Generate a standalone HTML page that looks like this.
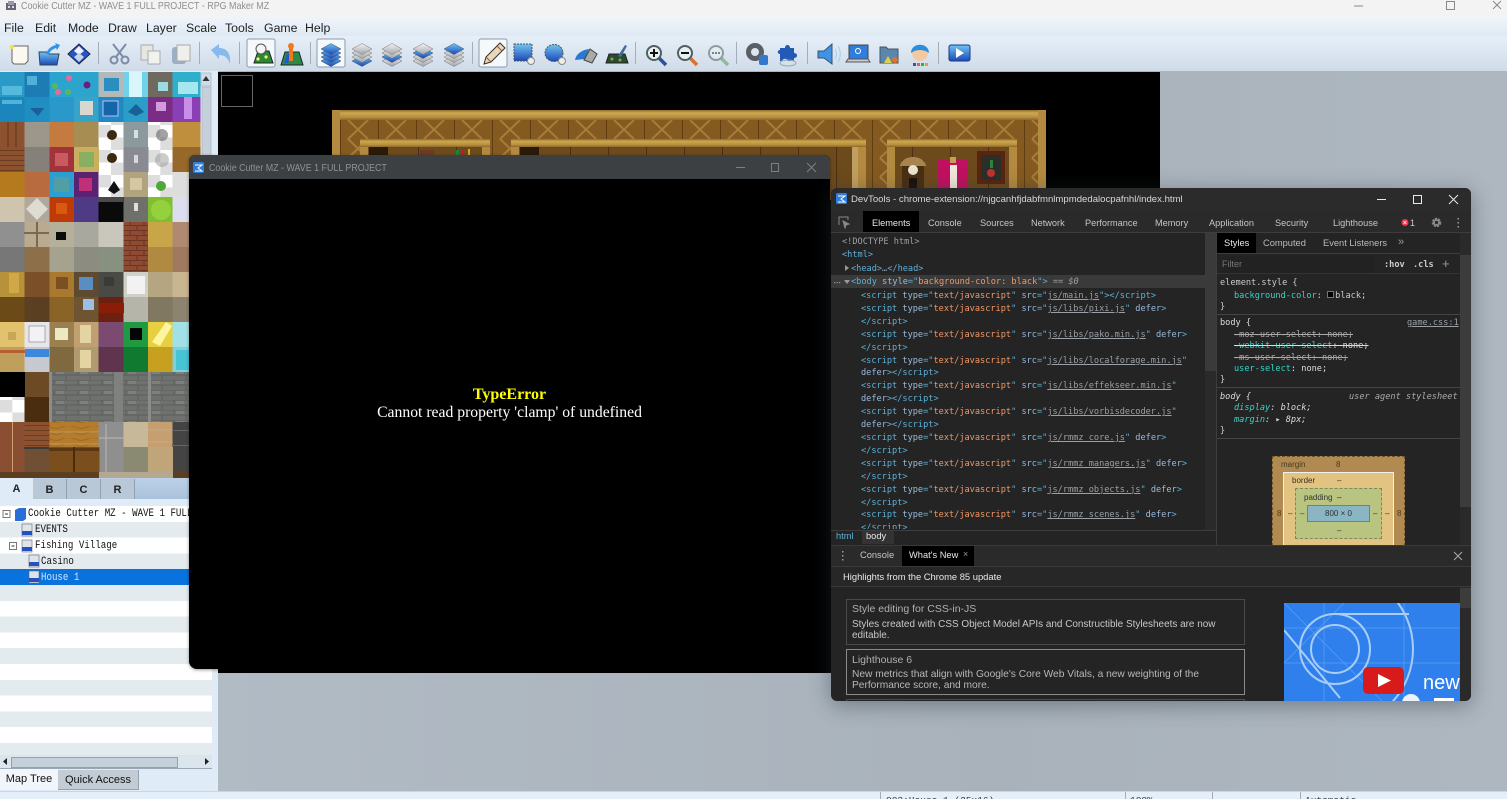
<!DOCTYPE html>
<html><head><meta charset="utf-8"><title>Cookie Cutter MZ</title>
<style>
html,body{margin:0;padding:0;width:1507px;height:799px;overflow:hidden;background:#aeb8c1;font-family:"Liberation Sans",sans-serif}
body{filter:blur(.35px)}
.a{position:absolute}
.t{position:absolute;white-space:pre}
.menu span{position:absolute;top:21px;font-size:12.3px;color:#222}
.mono{font-family:"DejaVu Sans Mono","Liberation Mono",monospace;font-size:8.6px;line-height:13px;letter-spacing:0}
.tab{position:absolute;top:218px;font-size:9.2px;color:#c6c6c6}
.g{color:#9aa0a6}.b{color:#5db0d7}.o{color:#f29766}.n{color:#9bbbdc}.u{text-decoration:underline;color:#9aa0a6}.c{color:#35d4c7}.w{color:#e0e0e0}
.row{position:absolute;left:0;width:212px;height:16px}
.tr{position:absolute;font-family:"Liberation Mono",monospace;font-size:11px;color:#111;transform:scaleX(.83);transform-origin:0 0;white-space:pre}
</style></head><body>

<!-- title + menu -->
<div class="a" style="left:0;top:0;width:1507px;height:18px;background:#f3f3f3"></div>
<div class="t" style="left:21px;top:0;font-size:10.4px;line-height:13px;color:#8f8f8f;transform:scaleX(.858);transform-origin:0 0">Cookie Cutter MZ - WAVE 1 FULL PROJECT - RPG Maker MZ</div>
<svg class="a" style="left:5px;top:0" width="12" height="12"><rect x="1" y="3" width="10" height="7" fill="#667"/><rect x="3" y="1" width="6" height="4" fill="#99a"/><rect x="3" y="6" width="2" height="2" fill="#dde"/><rect x="7" y="6" width="2" height="2" fill="#dde"/></svg>
<svg class="a" style="left:1340px;top:0" width="167" height="14" fill="none" stroke="#888"><path d="M14 6h9"/><rect x="106.500" y="1.500" width="8" height="8"/><path d="M153 1l8 8m0-8l-8 8"/></svg>
<div class="a menu" style="left:0;top:18px;width:1507px;height:18px;background:linear-gradient(#eef4fa,#dfe9f3)"></div>
<div class="menu"><span style="left:4px">File</span><span style="left:35px">Edit</span><span style="left:68px">Mode</span><span style="left:108px">Draw</span><span style="left:146px">Layer</span><span style="left:186px">Scale</span><span style="left:225px">Tools</span><span style="left:264px">Game</span><span style="left:305px">Help</span></div>
<div class="a" style="left:0;top:36px;width:1507px;height:35px;background:linear-gradient(#e6eff8,#cfdbe8)"></div>

<!-- toolbar -->
<svg class="a" style="left:0;top:36px" width="1010" height="35">
<defs>
<linearGradient id="bl" x1="0" y1="0" x2="0" y2="1"><stop offset="0" stop-color="#6fc4f2"/><stop offset="1" stop-color="#1c48b8"/></linearGradient>
<linearGradient id="gr" x1="0" y1="0" x2="0" y2="1"><stop offset="0" stop-color="#f4f4f4"/><stop offset="1" stop-color="#a3a5a8"/></linearGradient>
<g id="lb"><path d="M-10 0L0-5.500 10 0 0 5.500Z" fill="url(#bl)" stroke="#456" stroke-width=".5"/></g>
<g id="lg"><path d="M-10 0L0-5.500 10 0 0 5.500Z" fill="url(#gr)" stroke="#777" stroke-width=".5"/></g>
<g id="gl"><circle r="7" fill="#e8f1f1" stroke="#4e6062" stroke-width="2"/></g>
</defs>
<g stroke="#a3aeb9" stroke-width="1"><path d="M98.500 6v22M199.500 6v22M239.500 6v22M310.500 6v22M472.500 6v22M635.500 6v22M736.500 6v22M807.500 6v22M938.500 6v22"/></g>
<g fill="#f6f9fc" stroke="#8b9bac"><rect x="247" y="3" width="28" height="28" rx="2"/><rect x="317" y="3" width="28" height="28" rx="2"/><rect x="479" y="3" width="28" height="28" rx="2"/></g>
<!-- new -->
<path d="M12 10h16v15l-3 3H14l-2-2z" fill="#fbf9ef" stroke="#666"/><circle cx="12" cy="11" r="2" fill="#f4e23a"/>
<!-- open -->
<path d="M39 16h8l2 2h10l-2 11H40z" fill="url(#bl)" stroke="#345"/><path d="M46 18c2-6 6-8 10-9l-1-2 5 2-3 5-1-2c-3 1-6 3-7 6z" fill="#2f95e6"/>
<!-- save -->
<path d="M79 8l11 10-11 10-11-10z" fill="#2556c8" stroke="#224"/><path d="M79 10l5 5-5 4-5-4z" fill="#eef"/><path d="M74 21l5-4 5 4-5 5z" fill="#c9d4e8"/>
<!-- cut -->
<g fill="none" stroke="#7c8ba6" stroke-width="2"><path d="M113 8l10 13M126 8l-10 13"/><circle cx="114" cy="24" r="3.500"/><circle cx="125" cy="24" r="3.500"/></g>
<!-- copy -->
<path d="M141 9h12v15h-12z" fill="#e6e6e3" stroke="#aaa"/><path d="M148 15h12v13h-12z" fill="#f1f1ee" stroke="#aaa"/>
<!-- paste -->
<rect x="172" y="11" width="14" height="17" rx="3" fill="#9ab0c4"/><path d="M177 9h13v16h-13z" fill="#efefec" stroke="#aaa"/>
<!-- undo -->
<path d="M211 14l8-6v4c7 0 12 4 11 16-2-6-5-9-11-9v4z" fill="#86b9ee"/>
<!-- map -->
<path d="M254 27l4-12h11l4 12z" fill="#2b8a2b" stroke="#223"/><circle cx="261" cy="13" r="5" fill="#f4f4f4" stroke="#555"/><circle cx="266" cy="21" r="1.600" fill="#ee8"/><circle cx="258" cy="23" r="1.600" fill="#ee8"/>
<!-- event -->
<path d="M281 29l4-13h14l4 13z" fill="#2a8c44" stroke="#223"/><path d="M284 27l3-9h4l-3 9z" fill="#2058c8"/><rect x="289" y="11" width="4" height="14" fill="#ee7a20"/><circle cx="291" cy="10" r="3" fill="#ee7a20"/>
<!-- layers -->
<g transform="translate(331 0)"><use href="#lb" y="25"/><use href="#lb" y="21"/><use href="#lb" y="17"/><use href="#lb" y="13"/></g>
<g transform="translate(362 0)"><use href="#lb" y="25"/><use href="#lg" y="21"/><use href="#lg" y="17"/><use href="#lg" y="13"/></g>
<g transform="translate(392 0)"><use href="#lg" y="25"/><use href="#lb" y="21"/><use href="#lg" y="17"/><use href="#lg" y="13"/></g>
<g transform="translate(423 0)"><use href="#lg" y="25"/><use href="#lg" y="21"/><use href="#lb" y="17"/><use href="#lg" y="13"/></g>
<g transform="translate(454 0)"><use href="#lg" y="25"/><use href="#lg" y="21"/><use href="#lg" y="17"/><use href="#lb" y="13"/></g>
<!-- pencil -->
<path d="M484 28l2-7 14-14 5 5-14 14z" fill="#e8d8b8" stroke="#333"/><path d="M486 21l5 5M497 10l5 5" stroke="#c14030" fill="none"/>
<!-- rect -->
<rect x="514" y="8" width="18" height="17" fill="url(#bl)" stroke="#555" stroke-dasharray="2 1"/><circle cx="531" cy="25" r="3.500" fill="#eee" stroke="#888"/>
<!-- ellipse -->
<ellipse cx="554" cy="17" rx="9" ry="8.500" fill="url(#bl)" stroke="#555" stroke-dasharray="2 1"/><circle cx="562" cy="25" r="3.500" fill="#eee" stroke="#888"/>
<!-- flood -->
<path d="M575 24c1-6 7-10 14-11l-4 10z" fill="#2a78d0"/><path d="M584 24l6-11 7 5-5 9z" fill="#a9a9a6" stroke="#444"/>
<!-- shadow -->
<path d="M606 27l3-9h16l3 9z" fill="#2c4a2e" stroke="#222"/><path d="M618 20l7-11 2 1-6 11z" fill="#456a9a"/><circle cx="612" cy="23" r="1.500" fill="#7a5"/><circle cx="620" cy="24" r="1.500" fill="#7a5"/>
<!-- zoom -->
<g transform="translate(654 17)"><path d="M5 5l7 7" stroke="#2f4f9a" stroke-width="3.500"/><use href="#gl"/><path d="M-4 0h8M0-4v8" stroke="#111" stroke-width="2"/></g>
<g transform="translate(685 17)"><path d="M5 5l7 7" stroke="#e0702a" stroke-width="3.500"/><use href="#gl"/><path d="M-4 0h8" stroke="#111" stroke-width="2"/></g>
<g transform="translate(716 17)" opacity=".55"><path d="M5 5l7 7" stroke="#50a050" stroke-width="3.500"/><use href="#gl"/><path d="M-4 0h8" stroke="#333" stroke-width="2" stroke-dasharray="2 1"/></g>
<!-- db -->
<circle cx="755" cy="16" r="6.500" fill="none" stroke="#5a5f63" stroke-width="5"/><rect x="759" y="19" width="9" height="10" rx="2" fill="#3277d0"/>
<!-- plugin -->
<path d="M780 12h5c0-4 5-4 5 0h4v5c4 0 4 5 0 5v3h-6c-1-3-5-3-6 0h-2v-7c-3 0-3-4 0-4z" fill="#235ab8"/><ellipse cx="788" cy="27" rx="8" ry="3" fill="none" stroke="#9aa"/>
<!-- sound -->
<path d="M818 15h6l8-7v20l-8-6h-6z" fill="#3f93e2" stroke="#357"/><path d="M835 13c2 3 2 7 0 10M838 10c3 5 3 11 0 16" stroke="#9fd0ef" fill="none"/>
<!-- laptop -->
<rect x="849" y="9" width="19" height="14" fill="#2f7edc" stroke="#444"/><path d="M846 26h24l-2-3h-20z" fill="#ccc" stroke="#555"/><circle cx="858" cy="15" r="2.500" fill="none" stroke="#fff"/>
<!-- folder -->
<path d="M880 11h6l2 2h10v14h-18z" fill="#5d86ac" stroke="#456"/><path d="M884 27l4-7 4 7z" fill="#d9d24a"/><circle cx="895" cy="24" r="3" fill="#e0702a"/>
<!-- char -->
<circle cx="920" cy="17" r="8" fill="#f3c9a2"/><path d="M911 17c0-11 18-11 18 0-5-4-13-4-18 0z" fill="#2c8fdc"/><rect x="913" y="27" width="3" height="3" fill="#35a"/><rect x="917" y="27" width="3" height="3" fill="#d63"/><rect x="921" y="27" width="3" height="3" fill="#3a5"/><rect x="925" y="27" width="3" height="3" fill="#ca3"/>
<!-- play -->
<rect x="949" y="9" width="21" height="16" rx="2" fill="url(#bl)" stroke="#1a3a80"/><path d="M956 12l8 5-8 5z" fill="#fff"/>
</svg>

<!-- left panel -->
<div class="a" style="left:0;top:71px;width:218px;height:720px;background:#dfecf8"></div>

<!-- tileset -->
<svg class="a" style="left:0;top:72px" width="212" height="407" viewBox="0 72 212 407">
<defs>
<pattern id="chk" width="24.670" height="25" patternUnits="userSpaceOnUse"><rect width="25" height="25" fill="#fff"/><rect width="12.300" height="12.500" fill="#ddd"/><rect x="12.300" y="12.500" width="12.400" height="12.500" fill="#ddd"/></pattern>
<pattern id="brk" width="24" height="10" patternUnits="userSpaceOnUse"><rect width="24" height="10" fill="#6f716f"/><path d="M0 0h24M0 5h24M6 0v5M18 5v5" stroke="#5c5e5c" stroke-width="1"/><rect x="8" y="1" width="8" height="3" fill="#7e807e"/></pattern>
<pattern id="red" width="14" height="10" patternUnits="userSpaceOnUse"><rect width="14" height="10" fill="#8e4a32"/><path d="M0 .500h14M0 5.500h14M4 0v5M11 5v5" stroke="#6a3522"/></pattern>
<pattern id="wd" width="25" height="5" patternUnits="userSpaceOnUse"><rect width="25" height="5" fill="#8c5230"/><path d="M0 .500h25" stroke="#6a3c20"/></pattern>
<pattern id="wv" width="25" height="6" patternUnits="userSpaceOnUse"><rect width="25" height="6" fill="#b47c2c"/><path d="M0 1c4 2 8 2 12 0s8-2 13 0" stroke="#a06c20" fill="none"/></pattern>
</defs>
<!-- row fills -->
<g shape-rendering="crispEdges">
<rect x="0" y="72" width="25" height="25" fill="#2a9bc6"/><rect x="24.670" y="72" width="25" height="25" fill="#1c7cb3"/><rect x="49.330" y="72" width="25" height="25" fill="#2ba5cd"/><rect x="74" y="72" width="25" height="25" fill="#2ba5cd"/><rect x="98.670" y="72" width="25" height="25" fill="#b5b8b8"/><rect x="123.330" y="72" width="25" height="25" fill="#6fd2ea"/><rect x="148" y="72" width="25" height="25" fill="#6e6a5f"/><rect x="172.670" y="72" width="28" height="25" fill="#2eb0cc"/>
<rect x="0" y="97" width="25" height="25" fill="#1a86bb"/><rect x="24.670" y="97" width="25" height="25" fill="#1f8ec0"/><rect x="49.330" y="97" width="25" height="25" fill="#2b98cc"/><rect x="74" y="97" width="25" height="25" fill="#39a2c9"/><rect x="98.670" y="97" width="25" height="25" fill="#1f89c4"/><rect x="123.330" y="97" width="25" height="25" fill="#2a9dc9"/><rect x="148" y="97" width="25" height="25" fill="#7b2d85"/><rect x="172.670" y="97" width="28" height="25" fill="#8a3fb5"/>
<rect x="0" y="122" width="25" height="25" fill="#8c5230"/><rect x="0" y="147" width="25" height="25" fill="url(#wd)"/><rect x="24.670" y="122" width="25" height="25" fill="#9c978a"/><rect x="49.330" y="122" width="25" height="25" fill="#c57b3f"/><rect x="74" y="122" width="25" height="25" fill="#a78d52"/><rect x="98.670" y="122" width="25" height="50" fill="url(#chk)"/><rect x="123.330" y="122" width="25" height="25" fill="#8c9a9e"/><rect x="148" y="122" width="25" height="50" fill="url(#chk)"/><rect x="172.670" y="122" width="28" height="25" fill="#c08f3e"/>
<rect x="24.670" y="147" width="25" height="25" fill="#85807a"/><rect x="49.330" y="147" width="25" height="25" fill="#a3333a"/><rect x="74" y="147" width="25" height="25" fill="#c9b060"/><rect x="123.330" y="147" width="25" height="25" fill="#8a8a92"/><rect x="172.670" y="147" width="28" height="25" fill="#96682a"/>
<rect x="0" y="172" width="25" height="25" fill="#b5791e"/><rect x="24.670" y="172" width="25" height="25" fill="#b96b40"/><rect x="49.330" y="172" width="25" height="25" fill="#2a9fd0"/><rect x="74" y="172" width="25" height="25" fill="#5a2270"/><rect x="98.670" y="172" width="25" height="25" fill="url(#chk)"/><rect x="123.330" y="172" width="25" height="25" fill="#b0a380"/><rect x="148" y="172" width="25" height="25" fill="url(#chk)"/><rect x="172.670" y="172" width="28" height="25" fill="#ddd"/>
<rect x="0" y="197" width="25" height="25" fill="#cfc4ad"/><rect x="24.670" y="197" width="25" height="25" fill="#b0a898"/><rect x="49.330" y="197" width="25" height="25" fill="#c03a08"/><rect x="74" y="197" width="25" height="25" fill="#4f3a85"/><rect x="98.670" y="197" width="25" height="25" fill="#0a0a0a"/><rect x="123.330" y="197" width="25" height="25" fill="#70706a"/><rect x="148" y="197" width="25" height="25" fill="#80c030"/><rect x="172.670" y="197" width="28" height="25" fill="#dde"/>
<rect x="0" y="222" width="25" height="25" fill="#909090"/><rect x="24.670" y="222" width="25" height="25" fill="#b9aa90"/><rect x="49.330" y="222" width="25" height="25" fill="#b5b09a"/><rect x="74" y="222" width="25" height="25" fill="#a8a89f"/><rect x="98.670" y="222" width="25" height="25" fill="#c9c7bb"/><rect x="123.330" y="222" width="25" height="50" fill="url(#red)"/><rect x="148" y="222" width="25" height="25" fill="#c9a54a"/><rect x="172.670" y="222" width="28" height="25" fill="#b08a70"/>
<rect x="0" y="247" width="25" height="25" fill="#777"/><rect x="24.670" y="247" width="25" height="25" fill="#8d6f4a"/><rect x="49.330" y="247" width="25" height="25" fill="#a5a28f"/><rect x="74" y="247" width="25" height="25" fill="#8c8c80"/><rect x="98.670" y="247" width="25" height="25" fill="#889080"/><rect x="148" y="247" width="25" height="25" fill="#b08a40"/><rect x="172.670" y="247" width="28" height="25" fill="#a07a5f"/>
<rect x="0" y="272" width="25" height="25" fill="#b8923a"/><rect x="24.670" y="272" width="25" height="25" fill="#7b5028"/><rect x="49.330" y="272" width="25" height="25" fill="#a8792f"/><rect x="74" y="272" width="25" height="25" fill="#5d4a30"/><rect x="98.670" y="272" width="25" height="25" fill="#4a4a45"/><rect x="123.330" y="272" width="25" height="25" fill="#d0d0c8"/><rect x="148" y="272" width="25" height="25" fill="#b5a580"/><rect x="172.670" y="272" width="28" height="25" fill="#c9b58f"/>
<rect x="0" y="297" width="25" height="25" fill="#6b4a18"/><rect x="24.670" y="297" width="25" height="25" fill="#5a4020"/><rect x="49.330" y="297" width="25" height="25" fill="#8a6326"/><rect x="74" y="297" width="25" height="25" fill="#6e5430"/><rect x="98.670" y="297" width="25" height="25" fill="#6e2010"/><rect x="123.330" y="297" width="25" height="25" fill="#b5b5aa"/><rect x="148" y="297" width="25" height="25" fill="#807860"/><rect x="172.670" y="297" width="28" height="25" fill="#8c8470"/>
<rect x="0" y="322" width="25" height="25" fill="#e2c26c"/><rect x="24.670" y="322" width="25" height="25" fill="#e5e5ea"/><rect x="49.330" y="322" width="25" height="25" fill="#9a8050"/><rect x="74" y="322" width="25" height="25" fill="#c0a070"/><rect x="98.670" y="322" width="25" height="25" fill="#7a4a70"/><rect x="123.330" y="322" width="25" height="25" fill="#1f9a40"/><rect x="148" y="322" width="25" height="25" fill="#e6d040"/><rect x="172.670" y="322" width="28" height="25" fill="#a0e0e6"/>
<rect x="0" y="347" width="25" height="25" fill="#bf9f5c"/><rect x="24.670" y="347" width="25" height="25" fill="#c8c8d0"/><rect x="49.330" y="347" width="25" height="25" fill="#80683f"/><rect x="74" y="347" width="25" height="25" fill="#b09a70"/><rect x="98.670" y="347" width="25" height="25" fill="#60344f"/><rect x="123.330" y="347" width="25" height="25" fill="#0f7a30"/><rect x="148" y="347" width="25" height="25" fill="#c8a020"/><rect x="172.670" y="347" width="28" height="25" fill="#7fd0dc"/>
<rect x="0" y="372" width="25" height="25" fill="#000"/><rect x="24.670" y="372" width="25" height="25" fill="#6b4a25"/><rect x="49.330" y="372" width="151" height="50" fill="url(#brk)"/>
<rect x="0" y="397" width="25" height="25" fill="url(#chk)"/><rect x="24.670" y="397" width="25" height="25" fill="#4a2c0e"/>
<rect x="0" y="422" width="25" height="50" fill="#8a4f33"/><rect x="24.670" y="422" width="25" height="25" fill="url(#wd)"/><rect x="49.330" y="422" width="50" height="25" fill="url(#wv)"/><rect x="98.670" y="422" width="25" height="50" fill="#8f8f8f"/><rect x="123.330" y="422" width="25" height="25" fill="#c8b89a"/><rect x="148" y="422" width="25" height="25" fill="#c59f70"/><rect x="172.670" y="422" width="28" height="50" fill="#444"/>
<rect x="24.670" y="447" width="25" height="25" fill="#6f5034"/><rect x="49.330" y="447" width="50" height="25" fill="#7a4f1d"/><rect x="123.330" y="447" width="25" height="25" fill="#8a8a72"/><rect x="148" y="447" width="25" height="25" fill="#c0a47a"/>
<rect x="0" y="472" width="200" height="6" fill="#5a4020"/><rect x="99" y="472" width="74" height="6" fill="#b5a890"/>
</g>
<!-- tile details -->
<g fill="#67c6e6" opacity=".7"><rect x="2" y="86" width="20" height="9"/><rect x="27" y="76" width="10" height="9"/><rect x="2" y="100" width="20" height="4"/></g>
<g fill="#59b85a"><circle cx="55" cy="86" r="3"/><circle cx="68" cy="92" r="3"/></g><g fill="#e86a9a"><circle cx="69" cy="78" r="3"/><circle cx="58" cy="92" r="3"/></g>
<circle cx="87" cy="85" r="3.500" fill="#6a1e80"/><rect x="104" y="78" width="15" height="13" fill="#2a8fc0"/><rect x="129" y="72" width="13" height="25" fill="#d8f6fb"/><rect x="158" y="82" width="10" height="9" fill="#9cdce0"/><rect x="178" y="82" width="20" height="12" fill="#a5e6ef"/>
<path d="M30 108h14l-6 8z" fill="#1a5e9a"/><rect x="80" y="101" width="13" height="14" fill="#d8d8d0"/><rect x="103" y="101" width="15" height="15" fill="#1466a8" stroke="#cbe" stroke-width="1"/><path d="M128 112l8-8 8 8-8 4z" fill="#1a6096"/><rect x="156" y="102" width="10" height="9" fill="#d39ae0"/><rect x="184" y="97" width="8" height="22" fill="#c78fe8"/>
<circle cx="112" cy="135" r="5" fill="#3a2a10"/><circle cx="112" cy="158" r="5" fill="#3a2a10"/><rect x="134" y="130" width="4" height="8" fill="#d6e0e0"/><rect x="134" y="155" width="4" height="8" fill="#d6d6e0"/><circle cx="162" cy="135" r="6" fill="#666" opacity=".6"/><circle cx="162" cy="160" r="7" fill="#999" opacity=".5"/>
<path d="M8 122v25M16 122v25" stroke="#5e3319"/>
<rect x="55" y="153" width="13" height="13" fill="#c95a60"/><rect x="79" y="152" width="15" height="15" fill="#88b060"/><rect x="54" y="177" width="15" height="15" fill="#c8a020" opacity=".25"/><rect x="79" y="178" width="13" height="13" fill="#c03078"/><path d="M108 190l6-9 6 9-6 4z" fill="#111"/><rect x="130" y="178" width="12" height="12" fill="#d5c8a0"/><circle cx="161" cy="186" r="5" fill="#4ea838"/>
<circle cx="161" cy="210" r="10" fill="#93d23e"/><rect x="56" y="203" width="11" height="11" fill="#d85a10"/><path d="M26 209l11-11 11 11-11 11z" fill="#dedcd2"/><rect x="134" y="203" width="4" height="8" fill="#dedede"/><rect x="98" y="197" width="25" height="5" fill="#4a4a4a"/>
<rect x="56" y="232" width="10" height="8" fill="#0c0c0c"/><rect x="24" y="232" width="25" height="2" fill="#7a6a50"/><rect x="36" y="222" width="2" height="25" fill="#7a6a50"/>
<rect x="127" y="276" width="18" height="18" fill="#f2f2f2"/><rect x="56" y="277" width="12" height="12" fill="#7a4f22"/><rect x="79" y="277" width="14" height="13" fill="#5a8dc2"/><rect x="9" y="273" width="10" height="20" fill="#d0a848"/><rect x="83" y="299" width="11" height="11" fill="#9cc0e4"/><rect x="104" y="277" width="10" height="9" fill="#3a3a36"/><rect x="99" y="303" width="25" height="10" fill="#8a1c08"/>
<rect x="29" y="326" width="16" height="16" fill="#f2f2f4" stroke="#a8a8b0"/><rect x="25" y="349" width="24" height="8" fill="#3b88dc"/><rect x="55" y="328" width="13" height="12" fill="#ece8c4"/><rect x="8" y="332" width="8" height="8" fill="#c8a858"/><rect x="0" y="350" width="25" height="3" fill="#b85e30"/><rect x="80" y="325" width="11" height="18" fill="#e4d4a4"/><rect x="80" y="350" width="11" height="18" fill="#e4d4a4"/><rect x="130" y="328" width="12" height="12" fill="#050505"/><path d="M152 342l14-20 6 4-12 20z" fill="#fff5a0"/><rect x="176" y="350" width="24" height="20" fill="#46c4d4"/>
<rect x="0" y="372" width="25" height="25" fill="#000"/><rect x="49" y="372" width="3" height="50" fill="#8a8c8a"/><rect x="114" y="372" width="9" height="50" fill="#7f817f"/><rect x="148" y="372" width="3" height="50" fill="#8a8c8a"/>
<path d="M49 444h50M49 432h50M148 430h25M148 442h25" stroke="#d0b890" opacity=".5"/><rect x="49" y="448" width="50" height="3" fill="#5a3710"/><rect x="73" y="447" width="2" height="25" fill="#4a2c0a"/><path d="M106 424v48M99 438h25" stroke="#b8b8b8"/><rect x="24" y="447" width="25" height="2" fill="#3a3a3a"/><rect x="172" y="430" width="28" height="1" fill="#666"/><rect x="172" y="445" width="28" height="1" fill="#666"/>
<rect x="12" y="422" width="1" height="50" fill="#d0a070"/>
<!-- scrollbar -->
<rect x="200.500" y="72" width="11.500" height="407" fill="#dbe5ee"/><rect x="201" y="73" width="10" height="13" fill="#cfdbe6" stroke="#9aa8b5" stroke-width=".5"/><path d="M206 76l3.500 5h-7z" fill="#333"/><rect x="202" y="87" width="9" height="120" fill="#c5d0da" stroke="#9aa8b5" stroke-width=".5"/>
</svg>

<!-- abcr tabs -->
<div class="a" style="left:0;top:478px;width:212px;height:21px;background:linear-gradient(#bcd1e6,#a9c3dc)"></div>
<div class="a" style="left:0;top:478px;width:33px;height:22px;background:#dfecf8;font-size:11px;font-weight:bold;text-align:center;line-height:23px;color:#222">A</div>
<div class="a" style="left:33px;top:479px;width:33px;height:20px;background:#b9c8d6;border-right:1px solid #8fa0b0;font-size:11px;font-weight:bold;text-align:center;line-height:22px;color:#222">B</div>
<div class="a" style="left:67px;top:479px;width:33px;height:20px;background:#b9c8d6;border-right:1px solid #8fa0b0;font-size:11px;font-weight:bold;text-align:center;line-height:22px;color:#222">C</div>
<div class="a" style="left:101px;top:479px;width:33px;height:20px;background:#b9c8d6;border-right:1px solid #8fa0b0;font-size:11px;font-weight:bold;text-align:center;line-height:22px;color:#222">R</div>
<div class="a" style="left:0;top:499px;width:212px;height:7px;background:#dfecf8"></div>

<!-- tree -->
<div class="a" style="left:0;top:506px;width:212px;height:249px;background:repeating-linear-gradient(#fff 0 15.800px,#e3ebee 15.800px 31.600px);overflow:hidden"></div>
<div class="a" style="left:0;top:569px;width:212px;height:16px;background:#0a72dc"></div>
<svg class="a" style="left:0;top:506px" width="60" height="80">
<g fill="#fff" stroke="#777"><rect x="3" y="4.500" width="7" height="7"/><rect x="9.500" y="36.500" width="7" height="7"/></g><path d="M5 8h3M11.500 40h3" stroke="#333"/>
<path d="M15 4l4-2h7v11l-3 2h-8z" fill="#2a6fd8"/>
<rect x="22" y="18" width="10" height="12" fill="#dfe3ea" stroke="#667" stroke-width=".6"/><rect x="22" y="25" width="10" height="4" fill="#2450c0"/>
<rect x="22" y="34" width="10" height="12" fill="#dfe3ea" stroke="#667" stroke-width=".6"/><rect x="22" y="41" width="10" height="4" fill="#2450c0"/>
<rect x="29" y="49" width="10" height="12" fill="#dfe3ea" stroke="#667" stroke-width=".6"/><rect x="29" y="56" width="10" height="4" fill="#2450c0"/>
<rect x="29" y="65" width="10" height="12" fill="#dfe3ea" stroke="#667" stroke-width=".6"/><rect x="29" y="72" width="10" height="4" fill="#2450c0"/>
</svg>
<div class="tr" style="left:28px;top:508px">Cookie Cutter MZ - WAVE 1 FULL PROJECT</div>
<div class="tr" style="left:35px;top:524px">EVENTS</div>
<div class="tr" style="left:35px;top:540px">Fishing Village</div>
<div class="tr" style="left:41px;top:556px">Casino</div>
<div class="tr" style="left:41px;top:572px;color:#cfe6ff">House 1</div>

<!-- h scroll + tabs -->
<div class="a" style="left:0;top:755px;width:212px;height:13px;background:#dbe5ee;border-bottom:1px solid #9aa8b5"></div>
<div class="a" style="left:11px;top:757px;width:165px;height:9px;background:#c5d0da;border:1px solid #95a3b0"></div>
<svg class="a" style="left:0;top:755px" width="212" height="13"><path d="M7 3v7l-4-3.500z" fill="#222"/><path d="M205 3v7l4-3.500z" fill="#222"/></svg>
<div class="a" style="left:0;top:769px;width:58px;height:21px;background:#f1f6fb;font-size:11px;line-height:21px;text-align:center;color:#111">Map Tree</div>
<div class="a" style="left:58px;top:770px;width:81px;height:20px;background:#c3ccd4;border-bottom:1px solid #96a3af;border-right:1px solid #96a3af;box-sizing:border-box;font-size:11px;line-height:20px;text-align:center;color:#111">Quick Access</div>

<!-- map area -->
<div class="a" style="left:218px;top:71px;width:1289px;height:720px;background:linear-gradient(90deg,#b1bbc4,#a9b2bb 60%,#aeb7c0);border-top:1px solid #a7b6c4"></div>
<div class="a" style="left:218px;top:72px;width:942px;height:601px;background:#000"></div>
<div class="a" style="left:221px;top:75px;width:30px;height:30px;border:1px solid #666"></div>

<svg class="a" style="left:332px;top:110px" width="714" height="90" viewBox="332 110 714 90">
<defs>
<pattern id="x" width="38" height="19" patternUnits="userSpaceOnUse" x="340" y="120"><rect width="38" height="19" fill="#855a20"/><path d="M.5 0v19" stroke="#5e3d12" stroke-width="1"/><path d="M8 0l20 19M28 0L8 19" stroke="#a67d38" stroke-width="2"/></pattern>
<linearGradient id="gd" x1="0" y1="0" x2="0" y2="1"><stop offset="0" stop-color="#8f6e2c"/><stop offset=".3" stop-color="#cfa750"/><stop offset=".7" stop-color="#b89040"/><stop offset="1" stop-color="#8a6a2a"/></linearGradient>
<pattern id="pw" width="38" height="30" patternUnits="userSpaceOnUse"><rect width="38" height="30" fill="#6d4a1c"/><path d="M.5 0v30" stroke="#4a2f10"/></pattern>
</defs>
<rect x="332" y="110" width="714" height="90" fill="#5a3d14"/>
<rect x="340" y="120" width="698" height="80" fill="url(#x)"/>
<rect x="332" y="110" width="714" height="10" fill="url(#gd)"/><rect x="332" y="110" width="8" height="90" fill="#b38a40"/><rect x="1038" y="110" width="8" height="90" fill="#b38a40"/>
<g>
<rect x="360" y="139" width="130" height="61" fill="#b38a40"/><rect x="368" y="147" width="114" height="53" fill="url(#pw)"/><rect x="360" y="139" width="130" height="8" fill="url(#gd)"/>
<rect x="511" y="139" width="355" height="61" fill="#b38a40"/><rect x="519" y="147" width="339" height="53" fill="url(#pw)"/><rect x="511" y="139" width="355" height="8" fill="url(#gd)"/>
<rect x="887" y="139" width="130" height="61" fill="#b38a40"/><rect x="895" y="147" width="114" height="53" fill="url(#pw)"/><rect x="887" y="139" width="130" height="8" fill="url(#gd)"/>
</g>
<rect x="369" y="147" width="19" height="8" fill="#2a1a08"/><rect x="520" y="147" width="19" height="8" fill="#2a1a08"/><rect x="420" y="150" width="14" height="5" fill="#6a3a24"/><rect x="456" y="150" width="3" height="5" fill="#208040"/><rect x="462" y="149" width="2" height="6" fill="#b02030"/><rect x="468" y="149" width="2" height="6" fill="#e0a020"/>
<rect x="852" y="147" width="6" height="53" fill="#c0a060"/>
<!-- clock -->
<rect x="902" y="160" width="22" height="40" fill="#4a2e14"/><path d="M900 166c2-12 24-12 26 0z" fill="#a8854e"/><circle cx="913" cy="170" r="5" fill="#e8e4d0"/><rect x="909" y="178" width="8" height="22" fill="#1a1208"/>
<!-- curtain -->
<rect x="938" y="160" width="30" height="40" fill="#c01060"/><rect x="950" y="165" width="7" height="35" fill="#f0e8d8"/><rect x="950" y="157" width="6" height="6" fill="#c8a050"/>
<!-- painting -->
<rect x="977" y="151" width="28" height="33" fill="#5a2410"/><rect x="981" y="155" width="20" height="25" fill="#2a3028"/><circle cx="991" cy="173" r="4" fill="#c03030"/><rect x="990" y="160" width="3" height="8" fill="#308040"/>
</svg>

<!-- game window -->
<div class="a" style="left:189px;top:155px;width:641px;height:514px;background:#000;border-radius:6px 6px 8px 8px;overflow:hidden;box-shadow:0 1px 3px rgba(0,0,0,.4)">
<div class="a" style="left:0;top:0;width:641px;height:24px;background:#3d4042"></div>
</div>
<svg class="a" style="left:193px;top:162px" width="12" height="12"><rect width="11" height="11" rx="1.500" fill="#2f7edc"/><path d="M2 3h7L5 6l4 3H2" stroke="#fff" fill="none"/></svg>
<div class="t" style="left:209px;top:162px;font-size:10.100px;line-height:13px;color:#8f9294;transform:scaleX(.88);transform-origin:0 0">Cookie Cutter MZ - WAVE 1 FULL PROJECT</div>
<svg class="a" style="left:730px;top:160px" width="90" height="16" fill="none" stroke="#7d8083"><path d="M6 7.500h9"/><rect x="41.500" y="3.500" width="7" height="8"/><path d="M77 3l9 9m0-9l-9 9"/></svg>
<div class="t" style="left:189px;top:386px;width:641px;text-align:center;font-family:'Liberation Serif',serif;font-weight:bold;font-size:16px;line-height:18px;color:#ff0">TypeError</div>
<div class="t" style="left:189px;top:404px;width:641px;text-align:center;font-family:'Liberation Serif',serif;font-size:15.700px;line-height:18px;color:#fff">Cannot read property 'clamp' of undefined</div>

<!-- devtools -->
<div class="a" style="left:831px;top:188px;width:640px;height:513px;background:#242424;border-radius:6px;overflow:hidden;box-shadow:0 4px 22px rgba(40,50,60,.45)">
<div class="a" style="left:0;top:0;width:640px;height:23px;background:#2b2b2b"></div>
<div class="a" style="left:0;top:23px;width:640px;height:22px;background:#2a2a2a;border-bottom:1px solid #3d3d3d;box-sizing:border-box"></div>
<div class="a" style="left:32px;top:23px;width:56px;height:21px;background:#000"></div>
<div class="a" style="left:0;top:87px;width:374px;height:13px;background:#3a3a3a"></div>
<div class="a" style="left:374px;top:45px;width:11px;height:297px;background:#2a2a2a"></div>
<div class="a" style="left:374px;top:45px;width:11px;height:138px;background:#3a3a3a"></div>
<div class="a" style="left:385px;top:45px;width:1px;height:312px;background:#3d3d3d"></div>
<div class="a" style="left:386px;top:45px;width:39px;height:20px;background:#000"></div>
<div class="a" style="left:386px;top:65px;width:243px;height:1px;background:#3d3d3d"></div>
<div class="a" style="left:392px;top:68px;width:152px;height:17px;background:#222;"></div>
<div class="a" style="left:386px;top:85px;width:243px;height:1px;background:#333"></div>
<div class="a" style="left:386px;top:126px;width:243px;height:1px;background:#444"></div>
<div class="a" style="left:386px;top:199px;width:243px;height:1px;background:#444"></div>
<div class="a" style="left:386px;top:250px;width:243px;height:1px;background:#444"></div>
<div class="a" style="left:629px;top:45px;width:11px;height:312px;background:#2a2a2a"></div>
<div class="a" style="left:629px;top:67px;width:11px;height:252px;background:#3c3c3c"></div>
<!-- box model -->
<div class="a" style="left:441px;top:268px;width:133px;height:90px;background:#b08a50;border:1px dashed #6d5430;box-sizing:border-box"></div>
<div class="a" style="left:452px;top:284px;width:111px;height:74px;background:#e3c381;border:1px solid #f0f0f0;border-bottom:0;box-sizing:border-box"></div>
<div class="a" style="left:464px;top:300px;width:87px;height:51px;background:#b8c47f;border:1px dashed #7d8a55;box-sizing:border-box"></div>
<div class="a" style="left:476px;top:317px;width:63px;height:17px;background:#8ab5c3;border:1px solid #5f8792;box-sizing:border-box;font-size:8px;line-height:15px;text-align:center;color:#333">800 × 0</div>
<!-- breadcrumbs -->
<div class="a" style="left:0;top:342px;width:385px;height:1px;background:#3d3d3d"></div>
<div class="a" style="left:31px;top:343px;width:32px;height:13px;background:#333"></div>
<!-- drawer -->
<div class="a" style="left:0;top:357px;width:640px;height:22px;background:#2a2a2a;border-top:1px solid #3a3a3a;border-bottom:1px solid #3a3a3a;box-sizing:border-box"></div>
<div class="a" style="left:71px;top:358px;width:72px;height:20px;background:#000"></div>
<div class="a" style="left:0;top:379px;width:640px;height:20px;background:#272727;border-bottom:1px solid #3a3a3a;box-sizing:border-box"></div>
<div class="a" style="left:15px;top:411px;width:399px;height:46px;border:1px solid #4a4a4a;box-sizing:border-box"></div>
<div class="a" style="left:15px;top:461px;width:399px;height:46px;border:1.500px solid #8a8a8a;box-sizing:border-box"></div>
<div class="a" style="left:15px;top:511px;width:399px;height:10px;border:1px solid #4a4a4a;box-sizing:border-box"></div>
<div class="a" style="left:629px;top:399px;width:11px;height:114px;background:#2a2a2a"></div>
<div class="a" style="left:629px;top:400px;width:11px;height:20px;background:#3c3c3c"></div>
<svg class="a" style="left:453px;top:415px" width="176" height="98">
<rect width="176" height="98" fill="#2f80ec"/>
<g stroke="#5c9ff0" stroke-width=".7" fill="none"><path d="M0 25h176M0 60h176M40 0v98M120 0v98M0 0l98 98M60 0L0 60"/></g>
<g stroke="#a9cdf7" stroke-width="2" fill="none"><circle cx="51" cy="46" r="24"/><circle cx="51" cy="46" r="35"/><circle cx="51" cy="46" r="78"/><path d="M51 11h74M0 27l56 68"/></g>
<rect x="79" y="64" width="41" height="27" rx="5" fill="#d91a1a"/><path d="M94 71l13 6.500-13 6.500z" fill="#fff"/>
<circle cx="127" cy="100" r="9" fill="#fff" opacity=".9"/><rect x="150" y="95" width="20" height="3" fill="#fff"/>
</svg>
<div class="t" style="left:592px;top:483px;font-size:20px;line-height:24px;color:#fff;width:37px;overflow:hidden;">new</div>
</div>

<svg class="a" style="left:836px;top:193px" width="12" height="12"><rect width="11" height="11" rx="1.500" fill="#2f7edc"/><path d="M2 3h7L5 6l4 3H2" stroke="#fff" fill="none"/></svg>
<div class="t" style="left:851px;top:193px;font-size:9.580px;line-height:13px;color:#d8d8d8">DevTools - chrome-extension://njgcanhfjdabfmnlmpmdedalocpafnhl/index.html</div>
<svg class="a" style="left:1370px;top:192px" width="95" height="15" fill="none" stroke="#e8e8e8"><path d="M7 7.500h9"/><rect x="43.500" y="3.500" width="8" height="8"/><path d="M79 3l9 9m0-9l-9 9"/></svg>
<svg class="a" style="left:838px;top:216px" width="13" height="13" fill="none" stroke="#888"><path d="M1 9V1h9v3"/><path d="M5 5l6 3-3 1-1 3z" fill="#888"/></svg>

<div class="tab" style="left:872px;color:#e8e8e8">Elements</div><div class="tab" style="left:928px">Console</div><div class="tab" style="left:980px">Sources</div><div class="tab" style="left:1031px">Network</div><div class="tab" style="left:1085px">Performance</div><div class="tab" style="left:1155px">Memory</div><div class="tab" style="left:1209px">Application</div><div class="tab" style="left:1275px">Security</div><div class="tab" style="left:1333px">Lighthouse</div>
<svg class="a" style="left:1397px;top:216px" width="72" height="14"><circle cx="8" cy="6.500" r="3.500" fill="#e8384d"/><path d="M6.500 5l3 3m0-3l-3 3" stroke="#fff" stroke-width=".7"/><circle cx="39.500" cy="6.500" r="3.500" fill="#888" stroke="#888" stroke-width="2.500" stroke-dasharray="2 1"/><circle cx="39.500" cy="6.500" r="1.600" fill="#2a2a2a"/><g fill="#999"><rect x="60.500" y="2" width="1.500" height="1.500"/><rect x="60.500" y="6" width="1.500" height="1.500"/><rect x="60.500" y="10" width="1.500" height="1.500"/></g></svg>
<div class="t" style="left:1410px;top:218px;font-size:9px;color:#ccc">1</div>

<!-- DOM -->
<div class="t mono" style="left:842px;top:236px;color:#9aa0a6">&lt;!DOCTYPE html&gt;</div>
<div class="t mono b" style="left:842px;top:249px">&lt;html&gt;</div>
<div class="t mono b" style="left:851px;top:263px">&lt;head&gt;<span class="g">…</span>&lt;/head&gt;</div>
<div class="t mono b" style="left:851px;top:276px">&lt;body <span class="n">style</span>="<span class="o">background-color: black</span>"&gt; <span class="g">== <i>$0</i></span></div>
<svg class="a" style="left:833px;top:265px" width="18" height="24" fill="#999"><path d="M12 0l4 3-4 3z"/><path d="M11 15h6l-3 4z"/><rect x="1" y="17" width="1.200" height="1.200"/><rect x="3.500" y="17" width="1.200" height="1.200"/><rect x="6" y="17" width="1.200" height="1.200"/></svg>
<div class="a mono" style="left:861px;top:290px;width:344px;height:239px;overflow:hidden;white-space:pre;line-height:12.900px"><span class="b">&lt;script <span class="n">type</span>="<span class="o">text/javascript</span>" <span class="n">src</span>="<span class="u">js/main.js</span>"&gt;&lt;/script&gt;</span>
<span class="b">&lt;script <span class="n">type</span>="<span class="o">text/javascript</span>" <span class="n">src</span>="<span class="u">js/libs/pixi.js</span>" <span class="n">defer</span>&gt;</span>
<span class="b">&lt;/script&gt;</span>
<span class="b">&lt;script <span class="n">type</span>="<span class="o">text/javascript</span>" <span class="n">src</span>="<span class="u">js/libs/pako.min.js</span>" <span class="n">defer</span>&gt;</span>
<span class="b">&lt;/script&gt;</span>
<span class="b">&lt;script <span class="n">type</span>="<span class="o">text/javascript</span>" <span class="n">src</span>="<span class="u">js/libs/localforage.min.js</span>"</span>
<span class="n">defer</span><span class="b">&gt;&lt;/script&gt;</span>
<span class="b">&lt;script <span class="n">type</span>="<span class="o">text/javascript</span>" <span class="n">src</span>="<span class="u">js/libs/effekseer.min.js</span>"</span>
<span class="n">defer</span><span class="b">&gt;&lt;/script&gt;</span>
<span class="b">&lt;script <span class="n">type</span>="<span class="o">text/javascript</span>" <span class="n">src</span>="<span class="u">js/libs/vorbisdecoder.js</span>"</span>
<span class="n">defer</span><span class="b">&gt;&lt;/script&gt;</span>
<span class="b">&lt;script <span class="n">type</span>="<span class="o">text/javascript</span>" <span class="n">src</span>="<span class="u">js/rmmz_core.js</span>" <span class="n">defer</span>&gt;</span>
<span class="b">&lt;/script&gt;</span>
<span class="b">&lt;script <span class="n">type</span>="<span class="o">text/javascript</span>" <span class="n">src</span>="<span class="u">js/rmmz_managers.js</span>" <span class="n">defer</span>&gt;</span>
<span class="b">&lt;/script&gt;</span>
<span class="b">&lt;script <span class="n">type</span>="<span class="o">text/javascript</span>" <span class="n">src</span>="<span class="u">js/rmmz_objects.js</span>" <span class="n">defer</span>&gt;</span>
<span class="b">&lt;/script&gt;</span>
<span class="b">&lt;script <span class="n">type</span>="<span class="o">text/javascript</span>" <span class="n">src</span>="<span class="u">js/rmmz_scenes.js</span>" <span class="n">defer</span>&gt;</span>
<span class="b">&lt;/script&gt;</span></div>
<div class="t" style="left:836px;top:531px;font-size:9.300px;color:#5db0d7">html</div><div class="t" style="left:866px;top:531px;font-size:9.300px;color:#e8e8e8">body</div>

<!-- styles -->
<div class="t" style="left:1224px;top:238px;font-size:9.300px;color:#e8e8e8">Styles</div><div class="t" style="left:1263px;top:238px;font-size:9.300px;color:#bbb">Computed</div><div class="t" style="left:1323px;top:238px;font-size:9.300px;color:#bbb">Event Listeners</div><div class="t" style="left:1398px;top:236px;font-size:11px;color:#999">»</div>
<div class="t" style="left:1222px;top:259px;font-size:9px;color:#777">Filter</div>
<div class="t mono" style="left:1384px;top:259px;color:#ccc;font-weight:bold">:hov</div><div class="t mono" style="left:1413px;top:259px;color:#ccc;font-weight:bold">.cls</div><div class="t" style="left:1442px;top:256px;font-size:13px;color:#999">+</div>
<div class="t mono" style="left:1220px;top:277px;color:#ccc">element.style {</div>
<div class="t mono" style="left:1234px;top:290px;color:#ccc"><span class="c">background-color</span>: <span style="display:inline-block;width:7px;height:7px;background:#000;border:1px solid #777;box-sizing:border-box;margin-right:1px"></span>black;</div>
<div class="t mono" style="left:1220px;top:301px;color:#ccc">}</div>
<div class="t mono" style="left:1220px;top:317px;color:#ddd">body {</div><div class="t mono u" style="left:1407px;top:317px">game.css:1</div>
<div class="t mono" style="left:1234px;top:329px;color:#aaa;text-decoration:line-through">-moz-user-select: none;</div>
<div class="t mono" style="left:1234px;top:340px;color:#ddd;text-decoration:line-through"><span class="c">-webkit-user-select</span>: none;</div>
<div class="t mono" style="left:1234px;top:352px;color:#aaa;text-decoration:line-through">-ms-user-select: none;</div>
<div class="t mono" style="left:1234px;top:363px;color:#ddd"><span class="c">user-select</span>: none;</div>
<div class="t mono" style="left:1220px;top:374px;color:#ccc">}</div>
<div class="t mono" style="left:1220px;top:391px;color:#ddd;font-style:italic">body {</div><div class="t mono" style="left:1349px;top:391px;color:#aaa;font-style:italic">user agent stylesheet</div>
<div class="t mono" style="left:1234px;top:402px;color:#ddd;font-style:italic"><span class="c">display</span>: block;</div>
<div class="t mono" style="left:1234px;top:414px;color:#ddd;font-style:italic"><span class="c">margin</span>: ▸ 8px;</div>
<div class="t mono" style="left:1220px;top:425px;color:#ccc">}</div>
<!-- box labels -->
<div class="t" style="left:1281px;top:460px;font-size:8px;color:#4a3a20">margin</div><div class="t" style="left:1336px;top:460px;font-size:8px;color:#4a3a20">8</div>
<div class="t" style="left:1292px;top:476px;font-size:8px;color:#3a3020">border</div><div class="t" style="left:1337px;top:476px;font-size:8px;color:#3a3020">–</div>
<div class="t" style="left:1304px;top:493px;font-size:8px;color:#333">padding</div><div class="t" style="left:1337px;top:493px;font-size:8px;color:#222">–</div>
<div class="t" style="left:1277px;top:509px;font-size:8px;color:#4a3a20">8</div><div class="t" style="left:1288px;top:509px;font-size:8px;color:#333">–</div><div class="t" style="left:1300px;top:509px;font-size:8px;color:#333">–</div><div class="t" style="left:1373px;top:509px;font-size:8px;color:#333">–</div><div class="t" style="left:1385px;top:509px;font-size:8px;color:#333">–</div><div class="t" style="left:1397px;top:509px;font-size:8px;color:#4a3a20">8</div><div class="t" style="left:1337px;top:526px;font-size:8px;color:#333">–</div>

<!-- drawer text -->
<svg class="a" style="left:841px;top:550px" width="5" height="12" fill="#999"><rect x="1" y="1" width="1.500" height="1.500"/><rect x="1" y="5" width="1.500" height="1.500"/><rect x="1" y="9" width="1.500" height="1.500"/></svg>
<div class="t" style="left:860px;top:550px;font-size:9.300px;color:#c6c6c6">Console</div>
<div class="t" style="left:909px;top:550px;font-size:9.300px;color:#e8e8e8">What's New</div><div class="t" style="left:963px;top:549px;font-size:9px;color:#999">×</div>
<svg class="a" style="left:1452px;top:550px" width="12" height="12" stroke="#aaa" fill="none"><path d="M2 2l8 8m0-8l-8 8"/></svg>
<div class="t" style="left:843px;top:571px;font-size:9.400px;color:#e8e8e8">Highlights from the Chrome 85 update</div>
<div class="t" style="left:852px;top:603px;font-size:10.500px;color:#b0b0b0">Style editing for CSS-in-JS</div>
<div class="t" style="left:852px;top:620px;font-size:9.950px;line-height:10.500px;color:#c8c8c8">Styles created with CSS Object Model APIs and Constructible Stylesheets are now
editable.</div>
<div class="t" style="left:852px;top:654px;font-size:10.500px;color:#b0b0b0">Lighthouse 6</div>
<div class="t" style="left:852px;top:670px;font-size:10.200px;line-height:10.500px;color:#b8b8b8">New metrics that align with Google's Core Web Vitals, a new weighting of the
Performance score, and more.</div>

<!-- status bar -->
<div class="a" style="left:0;top:791px;width:1507px;height:8px;background:#e4eff9;overflow:hidden;border-top:1px solid #c9d6e2;box-sizing:border-box">
<div class="t" style="left:886px;top:3px;font-family:'Liberation Mono',monospace;font-size:9.500px;color:#333">003:House 1 (25x16)</div>
<div class="t" style="left:1130px;top:3px;font-family:'Liberation Mono',monospace;font-size:9.500px;color:#333">100%</div>
<div class="t" style="left:1305px;top:3px;font-family:'Liberation Mono',monospace;font-size:9.500px;color:#333">Automatic</div>
<div class="a" style="left:880px;top:0;width:1px;height:8px;background:#aab"></div><div class="a" style="left:1125px;top:0;width:1px;height:8px;background:#aab"></div><div class="a" style="left:1212px;top:0;width:1px;height:8px;background:#aab"></div><div class="a" style="left:1300px;top:0;width:1px;height:8px;background:#aab"></div>
</div>
</body></html>
